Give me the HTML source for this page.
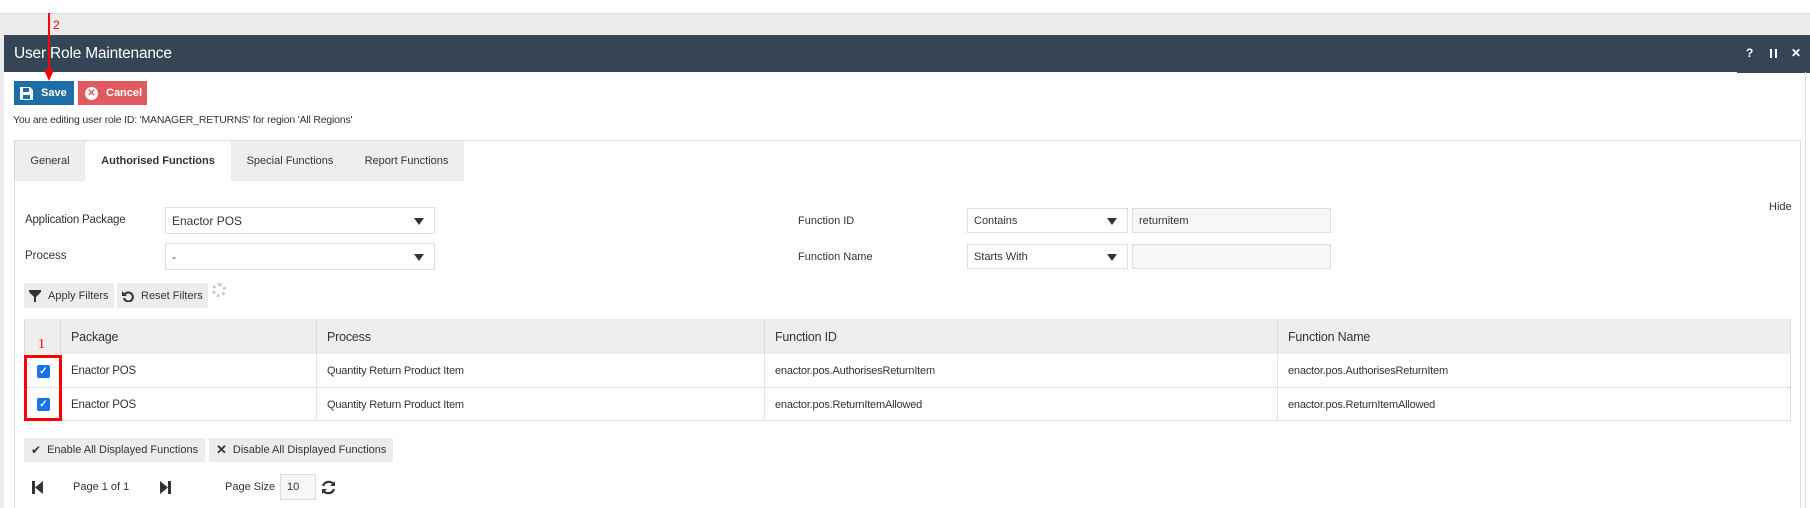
<!DOCTYPE html>
<html><head><style>
*{box-sizing:border-box;margin:0;padding:0}
body{width:1810px;height:508px;overflow:hidden;background:#fff;font-family:"Liberation Sans",Arial,sans-serif;font-size:12px;color:#333;position:relative}
.a{position:absolute}
.btn{position:absolute;background:#ececec;color:#333;font-size:12px;display:flex;align-items:center}
.sel{position:absolute;border:1px solid #ddd;background:#fff;display:flex;align-items:center;padding-left:6px;font-size:12px}
.sel:after{content:"";position:absolute;right:10px;top:50%;margin-top:-3px;border-left:5px solid transparent;border-right:5px solid transparent;border-top:7px solid #333}
.inp{position:absolute;border:1px solid #ddd;background:#f7f7f7;display:flex;align-items:center;padding-left:6px}
.th{position:absolute;top:319px;height:35px;background:#eee;border-right:1px solid #ddd;font-size:12.5px;display:flex;align-items:center;padding-left:10px;letter-spacing:-0.2px}
.td{position:absolute;height:33px;display:flex;align-items:center;padding-left:10px;border-right:1px solid #e3e3e3;letter-spacing:-0.2px}
.cb{position:absolute;width:13px;height:13px;background:#1a73e8;border-radius:2px;color:#fff;font-size:10px;line-height:13px;text-align:center;font-weight:bold}
</style></head><body>
<div class="a" style="left:0;top:13px;width:1810px;height:1px;background:#ddd"></div>
<div class="a" style="left:0;top:14px;width:1810px;height:494px;background:#ececec"></div>
<div class="a" style="left:4px;top:35px;width:1806px;height:473px;background:#fff"></div>
<div class="a" style="left:4px;top:35px;width:1806px;height:37px;background:#364555;color:#fff;font-size:15.5px;padding:10px 10px;letter-spacing:-0.2px">User Role Maintenance</div>
<div class="a" style="left:1737px;top:72px;width:73px;height:1px;background:#364555"></div>
<div class="a" style="left:1746px;top:46px;color:#fff;font-weight:bold;font-size:12px">?</div>
<div class="a" style="left:1770px;top:49px;width:2px;height:9px;background:#fff"></div>
<div class="a" style="left:1775px;top:49px;width:2px;height:9px;background:#fff"></div>
<div class="a" style="left:1791px;top:46px;color:#fff;font-weight:bold;font-size:12px">✕</div>
<div class="a" style="left:1805px;top:72px;width:1px;height:436px;background:#ddd"></div>

<div class="a" style="left:14px;top:81px;width:60px;height:24px;background:#1c6ea4;color:#fff;font-weight:bold;font-size:11px;display:flex;align-items:center">
<svg width="13" height="13" style="margin:0 8px 0 6px" viewBox="0 0 13 13"><path d="M0 0h10l3 3v10H0z" fill="#fff"/><rect x="3" y="1" width="6" height="4" fill="#1c6ea4"/><rect x="3" y="8" width="7" height="4" fill="#1c6ea4"/></svg>Save</div>
<div class="a" style="left:78px;top:81px;width:69px;height:24px;background:#e05a60;color:#fff;font-weight:bold;font-size:11px;display:flex;align-items:center">
<span style="display:inline-block;width:13px;height:13px;border-radius:50%;background:#fff;color:#e05a60;font-size:10px;line-height:13px;text-align:center;margin:0 8px 0 7px">✕</span>Cancel</div>
<div class="a" style="left:13px;top:114px;font-size:10.5px;letter-spacing:-0.2px">You are editing user role ID: 'MANAGER_RETURNS' for region 'All Regions'</div>

<div class="a" style="left:14px;top:140px;width:1787px;height:368px;border:1px solid #ddd;border-bottom:none"></div>
<div class="a" style="left:15px;top:141px;width:70px;height:40px;background:#eee;display:flex;align-items:center;justify-content:center;font-size:11px">General</div>
<div class="a" style="left:85px;top:141px;width:146px;height:40px;display:flex;align-items:center;justify-content:center;font-size:11px;font-weight:bold">Authorised Functions</div>
<div class="a" style="left:231px;top:141px;width:118px;height:40px;background:#eee;display:flex;align-items:center;justify-content:center;font-size:11px">Special Functions</div>
<div class="a" style="left:349px;top:141px;width:115px;height:40px;background:#eee;display:flex;align-items:center;justify-content:center;font-size:11px">Report Functions</div>

<div class="a" style="left:25px;top:214px;font-size:11.5px;letter-spacing:-0.2px">Application Package</div>
<div class="a" style="left:25px;top:250px;font-size:11.5px">Process</div>
<div class="sel" style="left:165px;top:207px;width:270px;height:27px">Enactor POS</div>
<div class="sel" style="left:165px;top:243px;width:270px;height:27px">-</div>
<div class="a" style="left:798px;top:215px;font-size:11px">Function ID</div>
<div class="a" style="left:798px;top:251px;font-size:11px">Function Name</div>
<div class="sel" style="left:967px;top:208px;width:161px;height:25px;font-size:11px">Contains</div>
<div class="sel" style="left:967px;top:244px;width:161px;height:25px;font-size:11px">Starts With</div>
<div class="inp" style="left:1132px;top:208px;width:199px;height:25px;font-size:11px">returnitem</div>
<div class="inp" style="left:1132px;top:244px;width:199px;height:25px"></div>
<div class="a" style="left:1769px;top:201px;font-size:11px">Hide</div>

<div class="btn" style="left:24px;top:283px;width:90px;height:25px;font-size:11px"><svg width="12" height="12" style="margin:0 7px 0 5px" viewBox="0 0 12 12"><path d="M0 0h12v2L7 7v5H5V7L0 2z" fill="#333"/></svg>Apply Filters</div>
<div class="btn" style="left:117px;top:283px;width:91px;height:25px;font-size:11px"><svg width="12" height="12" style="margin:0 7px 0 5px" viewBox="0 0 12 12"><path d="M3 4A4.5 4.5 0 1 1 2 8" fill="none" stroke="#333" stroke-width="2"/><path d="M0 1v5h5z" fill="#333"/></svg>Reset Filters</div>
<div class="a" style="left:212px;top:283px;width:14px;height:14px;border-radius:50%;border:3px dotted #ccc"></div>

<div class="a" style="left:24px;top:319px;width:1767px;height:102px;border:1px solid #ddd"></div>
<div class="th" style="left:25px;width:36px"></div>
<div class="th" style="left:61px;width:256px">Package</div>
<div class="th" style="left:317px;width:448px">Process</div>
<div class="th" style="left:765px;width:513px">Function ID</div>
<div class="th" style="left:1278px;width:512px;border-right:none">Function Name</div>
<div class="a" style="left:25px;top:387px;width:1765px;border-top:1px dotted #ccc"></div>
<div class="td" style="left:61px;top:354px;width:256px;font-size:11.5px">Enactor POS</div>
<div class="td" style="left:317px;top:354px;width:448px;font-size:11px">Quantity Return Product Item</div>
<div class="td" style="left:765px;top:354px;width:513px;font-size:11px">enactor.pos.AuthorisesReturnItem</div>
<div class="td" style="left:1278px;top:354px;width:512px;font-size:11px;border:none">enactor.pos.AuthorisesReturnItem</div>
<div class="td" style="left:61px;top:388px;width:256px;font-size:11.5px">Enactor POS</div>
<div class="td" style="left:317px;top:388px;width:448px;font-size:11px">Quantity Return Product Item</div>
<div class="td" style="left:765px;top:388px;width:513px;font-size:11px">enactor.pos.ReturnItemAllowed</div>
<div class="td" style="left:1278px;top:388px;width:512px;font-size:11px;border:none">enactor.pos.ReturnItemAllowed</div>
<div class="a" style="left:61px;top:354px;width:1px;height:66px;background:#ddd"></div>
<div class="cb" style="left:37px;top:365px">✓</div>
<div class="cb" style="left:37px;top:398px">✓</div>
<div class="a" style="left:24px;top:355px;width:38px;height:66px;border:3px solid #f00"></div>
<div class="a" style="left:38px;top:337px;color:#f00;font-family:'Liberation Serif',serif;font-size:14px">1</div>

<div class="btn" style="left:24px;top:438px;width:181px;height:24px;font-size:11px"><span style="margin:0 6px 0 7px;font-size:12px">✔</span>Enable All Displayed Functions</div>
<div class="btn" style="left:209px;top:438px;width:184px;height:24px;font-size:11px"><span style="margin:0 6px 0 7px;font-weight:bold;font-size:13px">✕</span>Disable All Displayed Functions</div>

<svg class="a" style="left:32px;top:481px" width="11" height="13" viewBox="0 0 11 13"><rect width="3" height="13" fill="#333"/><path d="M11 0v13L3 6.5z" fill="#333"/></svg>
<div class="a" style="left:73px;top:481px;font-size:11px">Page 1 of 1</div>
<svg class="a" style="left:160px;top:481px" width="11" height="13" viewBox="0 0 11 13"><rect x="8" width="3" height="13" fill="#333"/><path d="M0 0v13l8-6.5z" fill="#333"/></svg>
<div class="a" style="left:225px;top:481px;font-size:11px">Page Size</div>
<div class="inp" style="left:280px;top:474px;width:36px;height:26px;font-size:11px">10</div>
<svg class="a" style="left:321px;top:480px" width="15" height="15" viewBox="0 0 15 15"><path d="M2 6A6 6 0 0 1 13 5M13 9A6 6 0 0 1 2 10" fill="none" stroke="#333" stroke-width="2.2"/><path d="M14 1v5h-5z M1 14v-5h5z" fill="#333"/></svg>

<div class="a" style="left:48px;top:13px;width:2px;height:60px;background:#f00"></div>
<div class="a" style="left:44px;top:70px;border-left:5px solid transparent;border-right:5px solid transparent;border-top:11px solid #f00"></div>
<div class="a" style="left:53px;top:18px;color:#f00;font-size:12px">2</div>
</body></html>
